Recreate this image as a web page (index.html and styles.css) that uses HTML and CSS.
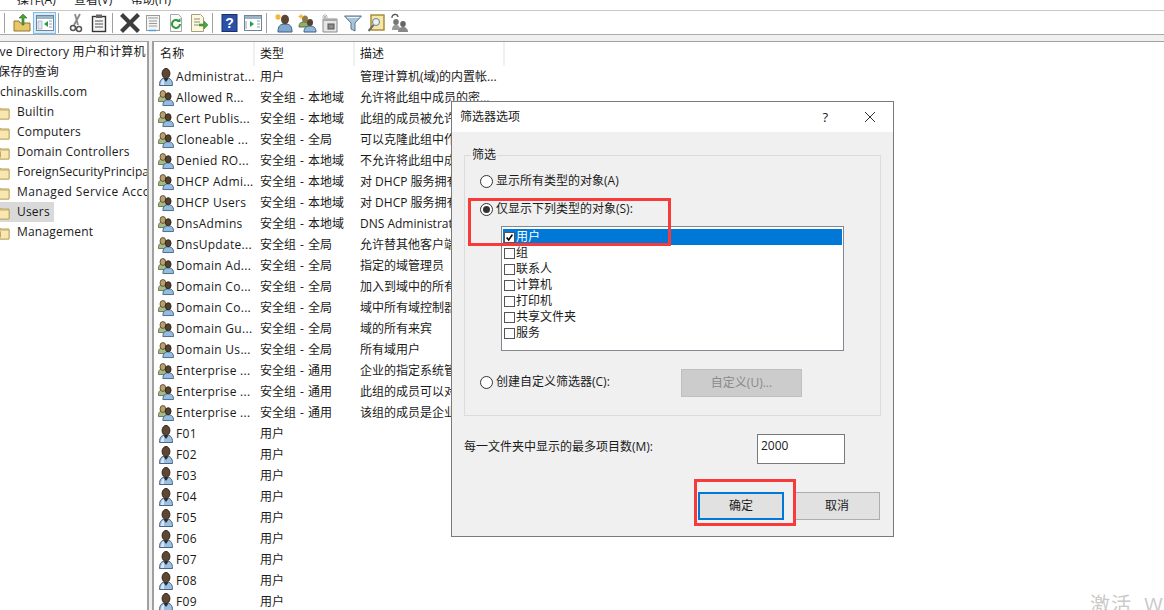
FILE: index.html
```html
<!DOCTYPE html>
<html lang="zh-CN">
<head>
<meta charset="utf-8">
<title>Active Directory 用户和计算机</title>
<link rel="stylesheet" href="styles.css">
</head>
<body>
<svg class="defs" width="0" height="0" aria-hidden="true">
  <defs>
    <symbol id="user" viewBox="0 0 16 18">
      <path d="M1.500 17.500c0-5.500 2-7.500 6.500-7.500s6.500 2 6.500 7.500z" fill="#9cc0e2" stroke="#47678a"/>
      <path d="M3 17c0-3 1-5 3-6v6z" fill="#d6e6f4"/>
      <ellipse cx="8" cy="5.500" rx="3.900" ry="5" fill="#5e4833" stroke="#2c2118"/>
      <path d="M5.500 10.500l2.500 3.500 2.500-3.500z" fill="#2f2a26"/>
    </symbol>
    <symbol id="group" viewBox="0 0 18 18">
      <path d="M.5 13c0-5 1.500-6.500 4.500-6.500s5.500 1.500 5.500 6.500z" fill="#a5bb86" stroke="#5d6f45"/>
      <ellipse cx="5.500" cy="4.500" rx="3.200" ry="3.900" fill="#b99f6e" stroke="#5a4a2e"/>
      <path d="M5.500 17.500c0-4.500 2-6.500 6-6.500s6 2 6 6.500z" fill="#94bbe0" stroke="#3f5f80"/>
      <ellipse cx="11.500" cy="7" rx="3.200" ry="4" fill="#54412e" stroke="#2c2118"/>
    </symbol>
    <symbol id="folder" viewBox="0 0 18 16">
      <path d="M1 3h6l2 2h8v10H1z" fill="#f3d98e" stroke="#b9a164"/>
      <path d="M1 6h16v9H1z" fill="#f8e7ae" stroke="#c2aa6c"/>
    </symbol>
    <symbol id="ou" viewBox="0 0 18 16">
      <path d="M1 3h6l2 2h8v10H1z" fill="#f3d98e" stroke="#b9a164"/>
      <path d="M1 6h16v9H1z" fill="#f8e7ae" stroke="#c2aa6c"/>
      <rect x="3" y="8" width="5" height="5" fill="#c9b27a" stroke="#7b6a3e"/>
    </symbol>
  </defs>
</svg>

<div class="menubar"><span>操作(A)</span><span>查看(V)</span><span>帮助(H)</span></div>

<div class="toolbar">
  <i class="sep"></i>
  <b class="tb"><svg viewBox="0 0 20 20"><path d="M2 8h5l1 2h10v8H2z" fill="#e8c66a" stroke="#94762e"/><path d="M10 12V5H7l4-4 4 4h-3v7z" fill="#4fa03a" stroke="#2c7420" stroke-width=".6"/></svg></b>
  <b class="tb on"><svg viewBox="0 0 20 20"><rect x="1.500" y="2.500" width="17" height="15" fill="#fff" stroke="#6f8494"/><rect x="2" y="3" width="16" height="3" fill="#9bb4c6"/><path d="M3 8h4v8H3z" fill="#dfe8ee" stroke="#8ba0ae" stroke-width=".6"/><path d="M13 8v6l-4-3z" fill="#2c9a4a"/><path d="M14 8h3M14 11h3M14 14h3" stroke="#8ba0ae"/></svg></b>
  <i class="sep"></i>
  <b class="tb"><svg viewBox="0 0 20 20"><path d="M14 1L8 12M9 1l3 11" stroke="#8a8a8a" stroke-width="1.800" fill="none"/><circle cx="7" cy="15" r="2.500" fill="none" stroke="#555" stroke-width="1.500"/><circle cx="13" cy="16" r="2.500" fill="none" stroke="#555" stroke-width="1.500"/></svg></b>
  <b class="tb"><svg viewBox="0 0 20 20"><rect x="3.500" y="3.500" width="13" height="15" fill="#f5f5f5" stroke="#333" stroke-width="1.400"/><rect x="7" y="1.500" width="6" height="3.500" fill="#666"/><path d="M6 8h8M6 11h8M6 14h8" stroke="#555"/></svg></b>
  <i class="sep"></i>
  <b class="tb"><svg viewBox="0 0 20 20"><path d="M3 3l14 14M17 3L3 17" stroke="#3d3d3d" stroke-width="4.200" stroke-linecap="square"/></svg></b>
  <b class="tb"><svg viewBox="0 0 20 20"><rect x="3.500" y="2.500" width="13" height="15" fill="#f4f4f4" stroke="#9a9a9a"/><rect x="5" y="4" width="10" height="2" fill="#c6c6c6"/><path d="M6 8h8M6 10.500h8M6 13h8" stroke="#9a9a9a"/><path d="M6 17.500h7" stroke="#4ea6dc" stroke-width="1.500"/></svg></b>
  <b class="tb"><svg viewBox="0 0 20 20"><path d="M4.500 1.500h8l3 3v14h-11z" fill="#fafafa" stroke="#a8a8a8"/><path d="M14 11a4 4 0 1 1-1.300-3" fill="none" stroke="#2e9a3c" stroke-width="2"/><path d="M14.500 5v4h-4z" fill="#2e9a3c"/></svg></b>
  <b class="tb"><svg viewBox="0 0 20 20"><path d="M2.500 1.500h9l3 3v14h-12z" fill="#fdf8e0" stroke="#a8a07c"/><path d="M5 6h6M5 9h6M5 12h4" stroke="#8c8c70"/><path d="M10 11h5V8l4 4-4 4v-3h-5z" fill="#48a83e" stroke="#2e7e26" stroke-width=".5"/></svg></b>
  <i class="sep"></i>
  <b class="tb"><svg viewBox="0 0 20 20"><rect x="2" y="1.500" width="15" height="17" fill="#2c50a8" stroke="#16306e"/><text x="9.500" y="15" class="glyph">?</text></svg></b>
  <b class="tb"><svg viewBox="0 0 20 20"><rect x="1.500" y="2.500" width="17" height="15" fill="#fff" stroke="#6f8494"/><rect x="2" y="3" width="16" height="3" fill="#9bb4c6"/><path d="M3 8v8M14 8h3M14 11h3M14 14h3" stroke="#8ba0ae"/><path d="M7 8v6l4-3z" fill="#2c9a4a"/></svg></b>
  <i class="sep"></i>
  <b class="tb"><svg viewBox="0 0 20 20"><path d="M4 19c0-6 2-8 7-8s7 2 7 8z" fill="#7fa9d2" stroke="#3f5f80"/><ellipse cx="11" cy="6.500" rx="4" ry="4.800" fill="#5a4632"/><path d="M4 1v6M1 4h6M2 2l4 4M6 2L2 6" stroke="#f0b62e" stroke-width="1.200"/></svg></b>
  <b class="tb"><svg viewBox="0 0 20 20"><path d="M2 14c0-4 2-5 5-5s5 1 5 5z" fill="#8fb06a" stroke="#5d6f45"/><ellipse cx="8" cy="6" rx="3" ry="3.500" fill="#8d7a4e"/><path d="M7 19c0-4 2-6 6-6s6 2 6 6z" fill="#8fb6dc" stroke="#3f5f80"/><ellipse cx="13" cy="9.500" rx="3" ry="3.500" fill="#54412e"/><path d="M4 1v5M1.500 3.500h5M2.500 2l3 3M5.500 2l-3 3" stroke="#f0b62e"/></svg></b>
  <b class="tb"><svg viewBox="0 0 20 20"><path d="M3 6h14v13H3z" fill="#e6e6e6" stroke="#8a8a8a"/><rect x="3" y="6" width="14" height="2" fill="#a8a8a8"/><rect x="8" y="11" width="6" height="5" fill="#8c8c8c" stroke="#555"/><path d="M5 1v6M2 4h6M3 2l4 4M7 2L3 6" stroke="#b8b8b8"/></svg></b>
  <b class="tb"><svg viewBox="0 0 20 20"><path d="M1.500 3h17l-6.500 7v8l-4-2v-6z" fill="#a9c4d8" stroke="#55768e"/><path d="M4 4.500h12" stroke="#eef5fa"/></svg></b>
  <b class="tb"><svg viewBox="0 0 20 20"><rect x="5" y="2" width="13" height="15" fill="#f6e7a8" stroke="#a4872e" stroke-width="1.400"/><circle cx="10" cy="9" r="3.500" fill="#e9f2f7" stroke="#6c7f8c"/><path d="M7.500 12l-5 6" stroke="#6c6c6c" stroke-width="2"/></svg></b>
  <b class="tb"><svg viewBox="0 0 20 20"><path d="M3 5a3 3 0 0 1 6-1" fill="none" stroke="#555" stroke-width="1.300"/><ellipse cx="7" cy="9" rx="2.800" ry="3" fill="#777"/><path d="M3 17c0-3 1-5 4-5s4 2 4 5z" fill="#999"/><ellipse cx="14" cy="11" rx="2.800" ry="3" fill="#666"/><path d="M9 19c0-3 2-5 5-5s5 2 5 5z" fill="#888"/></svg></b>
</div>

<main class="panes">
  <nav class="tree">
    <div class="node root">Active Directory 用户和计算机</div>
    <div class="node saved">保存的查询</div>
    <div class="node domain">chinaskills.com</div>
    <div class="node"><svg class="fi"><use href="#folder"/></svg><span>Builtin</span></div>
    <div class="node"><svg class="fi"><use href="#folder"/></svg><span>Computers</span></div>
    <div class="node"><svg class="fi"><use href="#ou"/></svg><span>Domain Controllers</span></div>
    <div class="node"><svg class="fi"><use href="#folder"/></svg><span class="tight">ForeignSecurityPrincipals</span></div>
    <div class="node"><svg class="fi"><use href="#folder"/></svg><span class="wide">Managed Service Accounts</span></div>
    <div class="node selected"><svg class="fi"><use href="#folder"/></svg><span>Users</span></div>
    <div class="node"><svg class="fi"><use href="#ou"/></svg><span>Management</span></div>
  </nav>

  <section class="list">
    <div class="row head"><div class="c1">名称</div><div class="c2">类型</div><div class="c3">描述</div></div>
    <div class="row"><div class="c1"><svg class="ri"><use href="#user"/></svg>Administrat...</div><div class="c2">用户</div><div class="c3">管理计算机(域)的内置帐...</div></div>
    <div class="row"><div class="c1"><svg class="ri"><use href="#group"/></svg>Allowed R...</div><div class="c2">安全组 - 本地域</div><div class="c3">允许将此组中成员的密...</div></div>
    <div class="row"><div class="c1"><svg class="ri"><use href="#group"/></svg>Cert Publis...</div><div class="c2">安全组 - 本地域</div><div class="c3">此组的成员被允许发布证书</div></div>
    <div class="row"><div class="c1"><svg class="ri"><use href="#group"/></svg>Cloneable ...</div><div class="c2">安全组 - 全局</div><div class="c3">可以克隆此组中作为域控制器</div></div>
    <div class="row"><div class="c1"><svg class="ri"><use href="#group"/></svg>Denied RO...</div><div class="c2">安全组 - 本地域</div><div class="c3">不允许将此组中成员的密码</div></div>
    <div class="row"><div class="c1"><svg class="ri"><use href="#group"/></svg>DHCP Admi...</div><div class="c2">安全组 - 本地域</div><div class="c3">对 DHCP 服务拥有管理</div></div>
    <div class="row"><div class="c1"><svg class="ri"><use href="#group"/></svg>DHCP Users</div><div class="c2">安全组 - 本地域</div><div class="c3">对 DHCP 服务拥有查看</div></div>
    <div class="row"><div class="c1"><svg class="ri"><use href="#group"/></svg>DnsAdmins</div><div class="c2">安全组 - 本地域</div><div class="c3">DNS Administrators 组</div></div>
    <div class="row"><div class="c1"><svg class="ri"><use href="#group"/></svg>DnsUpdate...</div><div class="c2">安全组 - 全局</div><div class="c3">允许替其他客户端执行</div></div>
    <div class="row"><div class="c1"><svg class="ri"><use href="#group"/></svg>Domain Ad...</div><div class="c2">安全组 - 全局</div><div class="c3">指定的域管理员</div></div>
    <div class="row"><div class="c1"><svg class="ri"><use href="#group"/></svg>Domain Co...</div><div class="c2">安全组 - 全局</div><div class="c3">加入到域中的所有工作站</div></div>
    <div class="row"><div class="c1"><svg class="ri"><use href="#group"/></svg>Domain Co...</div><div class="c2">安全组 - 全局</div><div class="c3">域中所有域控制器</div></div>
    <div class="row"><div class="c1"><svg class="ri"><use href="#group"/></svg>Domain Gu...</div><div class="c2">安全组 - 全局</div><div class="c3">域的所有来宾</div></div>
    <div class="row"><div class="c1"><svg class="ri"><use href="#group"/></svg>Domain Us...</div><div class="c2">安全组 - 全局</div><div class="c3">所有域用户</div></div>
    <div class="row"><div class="c1"><svg class="ri"><use href="#group"/></svg>Enterprise ...</div><div class="c2">安全组 - 通用</div><div class="c3">企业的指定系统管理员</div></div>
    <div class="row"><div class="c1"><svg class="ri"><use href="#group"/></svg>Enterprise ...</div><div class="c2">安全组 - 通用</div><div class="c3">此组的成员可以对林中</div></div>
    <div class="row"><div class="c1"><svg class="ri"><use href="#group"/></svg>Enterprise ...</div><div class="c2">安全组 - 通用</div><div class="c3">该组的成员是企业中的</div></div>
    <div class="row"><div class="c1"><svg class="ri"><use href="#user"/></svg>F01</div><div class="c2">用户</div></div>
    <div class="row"><div class="c1"><svg class="ri"><use href="#user"/></svg>F02</div><div class="c2">用户</div></div>
    <div class="row"><div class="c1"><svg class="ri"><use href="#user"/></svg>F03</div><div class="c2">用户</div></div>
    <div class="row"><div class="c1"><svg class="ri"><use href="#user"/></svg>F04</div><div class="c2">用户</div></div>
    <div class="row"><div class="c1"><svg class="ri"><use href="#user"/></svg>F05</div><div class="c2">用户</div></div>
    <div class="row"><div class="c1"><svg class="ri"><use href="#user"/></svg>F06</div><div class="c2">用户</div></div>
    <div class="row"><div class="c1"><svg class="ri"><use href="#user"/></svg>F07</div><div class="c2">用户</div></div>
    <div class="row"><div class="c1"><svg class="ri"><use href="#user"/></svg>F08</div><div class="c2">用户</div></div>
    <div class="row"><div class="c1"><svg class="ri"><use href="#user"/></svg>F09</div><div class="c2">用户</div></div>
  </section>
</main>

<div class="watermark">激活 W</div>

<div class="dialog">
  <header class="titlebar">
    <span>筛选器选项</span>
    <span class="help">?</span>
    <svg class="close" viewBox="0 0 12 12"><path d="M1 1l10 10M11 1L1 11" stroke="#333" fill="none"/></svg>
  </header>
  <div class="dbody">
    <fieldset class="grp">
      <legend>筛选</legend>
      <div class="radio r1"><i class="dot"></i>显示所有类型的对象(A)</div>
      <div class="radio r2"><i class="dot checked"></i>仅显示下列类型的对象(S):</div>
      <div class="types">
        <div class="type hl"><i class="cb on"><svg viewBox="0 0 11 11"><path d="M2 5.500l2.500 3L9 2" stroke="#000" stroke-width="2" fill="none"/></svg></i>用户</div>
        <div class="type"><i class="cb"></i>组</div>
        <div class="type"><i class="cb"></i>联系人</div>
        <div class="type"><i class="cb"></i>计算机</div>
        <div class="type"><i class="cb"></i>打印机</div>
        <div class="type"><i class="cb"></i>共享文件夹</div>
        <div class="type"><i class="cb"></i>服务</div>
      </div>
      <div class="custom">
        <div class="radio"><i class="dot"></i>创建自定义筛选器(C):</div>
        <div class="btn disabled">自定义(U)...</div>
      </div>
    </fieldset>
    <div class="maxrow">
      <span>每一文件夹中显示的最多项目数(M):</span>
      <div class="num">2000</div>
    </div>
    <div class="actions">
      <div class="btn primary">确定</div>
      <div class="btn">取消</div>
    </div>
  </div>
  <i class="mark m1"></i>
  <i class="mark m2"></i>
</div>
</body>
</html>
```

FILE: styles.css
```css
* { box-sizing: border-box; }
html, body { margin: 0; height: 610px; overflow: hidden; }
body {
  position: relative;
  display: flex;
  flex-direction: column;
  background: #fff;
  color: #1a1a1a;
  font: 12px/16px "Open Sans", "Noto Sans CJK SC", sans-serif;
}
.defs { position: absolute; }

.menubar {
  height: 11px;
  flex: none;
  overflow: hidden;
  border-bottom: 1px solid #c8c8c8;
  display: flex;
  padding-left: 17px;
  gap: 17px;
  line-height: 10px;
}
.menubar span { display: block; margin-top: -5px; width: 40px; }

.toolbar {
  flex: none;
  height: 24px;
  display: flex;
  align-items: center;
  padding-left: 3px;
  background: #fff;
  border-bottom: 1px solid #a9a9a9;
}
.sep { width: 1px; height: 20px; background: #a0a0a0; margin: 0 5px 0 1px; }
.tb { width: 23px; height: 22px; display: flex; align-items: center; justify-content: center; flex: none; }
.tb svg { width: 20px; height: 20px; }
.tb.on { background: #d8eaf9; border: 1px solid #7fbfee; }
.tb + .sep { margin-left: 2px; }
.glyph { font: 700 14px "Liberation Sans", sans-serif; fill: #fff; text-anchor: middle; }

.panes {
  flex: 1;
  min-height: 0;
  display: flex;
  gap: 3px;
  background: #f0f0f0;
  padding-top: 6px;
}
.tree {
  width: 149px;
  flex: none;
  background: #fff;
  border-top: 1px solid #a0a0a0;
  border-right: 2px solid #a0a0a0;
  overflow: hidden;
  white-space: nowrap;
  letter-spacing: .2px;
}
.node { height: 20px; display: flex; align-items: center; }
.root { margin-left: -22px; }
.saved { margin-left: -2px; }
.fi { width: 18px; height: 16px; margin-left: -8px; margin-right: 7px; flex: none; }
.node.selected { background: #d9d9d9; width: 54px; }
.tight { letter-spacing: 0; }
.wide { letter-spacing: .45px; }

.list {
  flex: 1;
  background: #fff;
  border-top: 1px solid #a0a0a0;
  border-left: 2px solid #a0a0a0;
  overflow: hidden;
  padding-left: 1px;
}
.row { display: flex; height: 21px; align-items: center; white-space: nowrap; }
.c1 { width: 100px; padding-left: 3px; display: flex; align-items: center; flex: none; letter-spacing: .3px; }
.c2 { width: 100px; padding-left: 5px; flex: none; word-spacing: 1px; }
.c3 { padding-left: 5px; flex: none; }
.head { height: 24px; }
.head > div { height: 24px; line-height: 24px; border-right: 2px solid #f0f0f0; display: block; }
.head .c1 { padding-left: 5px; }
.head .c3 { width: 150px; }
.ri { width: 16px; height: 18px; margin-right: 2px; flex: none; }

.watermark {
  position: absolute;
  left: 1090px;
  top: 591px;
  font-size: 20px;
  line-height: 28px;
  color: #c9c9c9;
  letter-spacing: 1px;
  word-spacing: 6px;
}

.dialog {
  position: absolute;
  left: 451px;
  top: 101px;
  width: 443px;
  height: 436px;
  background: #f0f0f0;
  border: 1px solid #7a7a7a;
  display: flex;
  flex-direction: column;
}
.titlebar {
  height: 30px;
  flex: none;
  background: #fff;
  display: flex;
  align-items: center;
  padding-left: 8px;
}
.help { margin-left: auto; margin-right: 36px; font-size: 13px; }
.close { width: 12px; height: 12px; margin-right: 17px; }

.dbody { flex: 1; padding: 16px 12px 0 12px; display: flex; flex-direction: column; }
.grp {
  margin: 0;
  padding: 0 0 0 15px;
  height: 268px;
  border: 1px solid #dcdcdc;
  min-width: 0;
}
.grp legend { padding: 0 1px; margin-left: -9px; line-height: 14px; }
.radio { display: flex; align-items: center; height: 16px; }
.r1 { margin-top: 11px; }
.r2 { margin-top: 12px; }
.dot {
  width: 13px;
  height: 13px;
  border-radius: 50%;
  border: 1px solid #333;
  background: #fff;
  margin-right: 3px;
  flex: none;
  position: relative;
}
.dot.checked::after {
  content: "";
  position: absolute;
  left: 2px;
  top: 2px;
  width: 7px;
  height: 7px;
  border-radius: 50%;
  background: #333;
}
.types {
  width: 343px;
  height: 125px;
  margin: 9px 0 0 21px;
  background: #fff;
  border: 1px solid #828790;
  padding: 2px 1px;
  line-height: 16px;
}
.type { height: 16px; display: flex; align-items: center; padding-left: 1px; }
.type.hl { background: #0078d7; color: #fff; }
.cb {
  width: 11px;
  height: 11px;
  border: 1px solid #555;
  background: #fff;
  margin-right: 1px;
  flex: none;
  display: block;
}
.cb svg { display: block; width: 9px; height: 9px; }
.custom { display: flex; align-items: center; margin-top: 18px; }
.custom .radio { width: 201px; margin-bottom: 2px; }
.btn {
  width: 86px;
  height: 28px;
  display: flex;
  align-items: center;
  justify-content: center;
  background: #e1e1e1;
  border: 1px solid #adadad;
  flex: none;
}
.btn.disabled { width: 121px; background: #cccccc; border-color: #bfbfbf; color: #8a8a8a; }
.btn.primary { border: 2px solid #0078d7; margin-right: 10px; }
.maxrow { display: flex; align-items: center; margin-top: 18px; height: 30px; }
.maxrow span { width: 293px; margin-bottom: 4px; }
.num {
  width: 88px;
  height: 30px;
  background: #fff;
  border: 1px solid #7a7a7a;
  padding: 3px 3px;
}
.actions { display: flex; margin-top: 28px; padding-left: 234px; }

.mark { position: absolute; border: 3px solid #f73b3b; display: block; }
.m1 { left: 16px; top: 96px; width: 203px; height: 48px; }
.m2 { left: 242px; top: 377px; width: 102px; height: 47px; }
```
